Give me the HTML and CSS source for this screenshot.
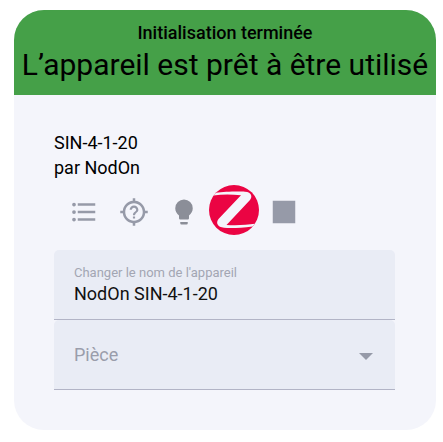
FILE: index.html
```html
<!DOCTYPE html>
<html lang="fr">
<head>
<meta charset="utf-8">
<meta name="viewport" content="width=device-width, initial-scale=1">
<title>SIN-4-1-20</title>
<link rel="stylesheet" href="styles.css">
</head>
<body>
<main class="card">
  <header class="status">
    <p class="status-label">Initialisation terminée</p>
    <h1 class="status-title">L’appareil est prêt à être utilisé</h1>
  </header>
  <div class="content">
    <p class="info">SIN-4-1-20</p>
    <p class="info">par NodOn</p>
    <div class="icons">
      <button class="icon" type="button"><svg viewBox="0 0 24 24"><path d="M7 5H21V7H7V5M7 13V11H21V13H7M4 4.5A1.5 1.5 0 1 1 4 7.5A1.5 1.5 0 0 1 4 4.5M4 10.5A1.5 1.5 0 1 1 4 13.5A1.5 1.5 0 0 1 4 10.5M7 19V17H21V19H7M4 16.5A1.5 1.5 0 1 1 4 19.5A1.5 1.5 0 0 1 4 16.5Z"/></svg></button>
      <button class="icon" type="button"><svg viewBox="0 0 24 24"><path d="M3.05 13H1V11H3.05C3.5 6.83 6.83 3.5 11 3.05V1H13V3.05C17.17 3.5 20.5 6.83 20.95 11H23V13H20.95C20.5 17.17 17.17 20.5 13 20.95V23H11V20.95C6.83 20.5 3.5 17.17 3.05 13M12 5C8.13 5 5 8.13 5 12S8.13 19 12 19 19 15.87 19 12 15.87 5 12 5M11.13 17.25H12.88V15.5H11.13V17.25M12 6.75C10.07 6.75 8.5 8.32 8.5 10.25H10.25C10.25 9.28 11.03 8.5 12 8.5S13.75 9.28 13.75 10.25C13.75 12 11.13 11.78 11.13 14.63H12.88C12.88 12.66 15.5 12.44 15.5 10.25C15.5 8.32 13.93 6.75 12 6.75Z"/></svg></button>
      <button class="icon icon-bulb" type="button"><svg viewBox="0 0 24 24"><path d="M12 2A7 7 0 0 0 5 9C5 11.38 6.19 13.47 8 14.74V17A1 1 0 0 0 9 18H15A1 1 0 0 0 16 17V14.74C17.81 13.47 19 11.38 19 9A7 7 0 0 0 12 2M9 21A1 1 0 0 0 10 22H14A1 1 0 0 0 15 21V20H9V21Z"/></svg></button>
      <svg class="logo" viewBox="0 0 50 50"><circle cx="25" cy="25" r="25" fill="#eb0443"/><path d="M7 7.7C15 6.5 30 6.3 36 6.7C43 7 43.5 12 41 15L17.5 40C28 40.7 38 40 46 38.8L43.5 41.5C32 43 22 43.3 15 42.8C8.5 42 6.5 38 9.5 34L32 10.3C22 9.3 13 9.3 4.5 10.5Z" fill="#f4f5fb"/></svg>
      <button class="icon" type="button"><svg viewBox="0 0 24 24"><path d="M3 3H21V21H3Z"/></svg></button>
    </div>
    <div class="field">
      <label class="field-label" for="name">Changer le nom de l'appareil</label>
      <input class="field-input" id="name" type="text" value="NodOn SIN-4-1-20">
    </div>
    <div class="field field-row">
      <select class="field-select" id="room" aria-label="Pièce"><option>Pièce</option></select>
      <svg class="arrow" viewBox="0 0 14 7"><path d="M0 0H14L7 7Z"/></svg>
    </div>
  </div>
</main>
</body>
</html>
```
FILE: styles.css
```css
* {
  box-sizing: border-box;
}

body {
  margin: 0;
  padding: 10px 7px 12px 14px;
  background: #fff;
  color: #000;
  font-family: Roboto, "Liberation Sans", sans-serif;
  font-size: 18px;
}

p,
h1 {
  margin: 0;
}

.card {
  overflow: hidden;
  border-radius: 30px;
  background: #f4f5fb;
}

.status {
  padding: 10px 0 11px;
  background: #45a048;
  text-align: center;
}

.status-label {
  font-weight: 500;
  line-height: 25px;
}

.status-title {
  font-size: 30px;
  font-weight: 400;
  line-height: 39px;
  white-space: nowrap;
}

.content {
  padding: 35px 41px 40px 40px;
}

.info {
  line-height: 25px;
}

.icons {
  display: flex;
  align-items: center;
  padding: 5px 5px 15px;
}

.icon {
  display: flex;
  justify-content: center;
  width: 50px;
  padding: 4px 0 0;
  border: 0;
  background: none;
  color: #969aa8;
}

.icon-bulb {
  color: #8b8e98;
}

.icon svg {
  width: 30px;
  height: 30px;
  fill: currentColor;
}

.logo {
  width: 50px;
  height: 50px;
}

.field {
  height: 70px;
  padding: 12px 20px;
  border-bottom: 1px solid #b2b4c6;
  border-radius: 5px 5px 0 0;
  background: #e9ecf5;
}

.field-label {
  display: block;
  color: #a3a6b3;
  font-size: 13px;
  line-height: 22px;
}

.field-input,
.field-select {
  display: block;
  width: 100%;
  padding: 0;
  border: 0;
  outline: 0;
  background: none;
  color: #111;
  font: inherit;
  line-height: 20px;
}

.field-row {
  display: flex;
  align-items: center;
}

.field-select {
  appearance: none;
  color: #9a9dab;
}

.arrow {
  flex: none;
  width: 14px;
  height: 7px;
  margin: 4px 2px 0 0;
  fill: #969aa8;
}
```
